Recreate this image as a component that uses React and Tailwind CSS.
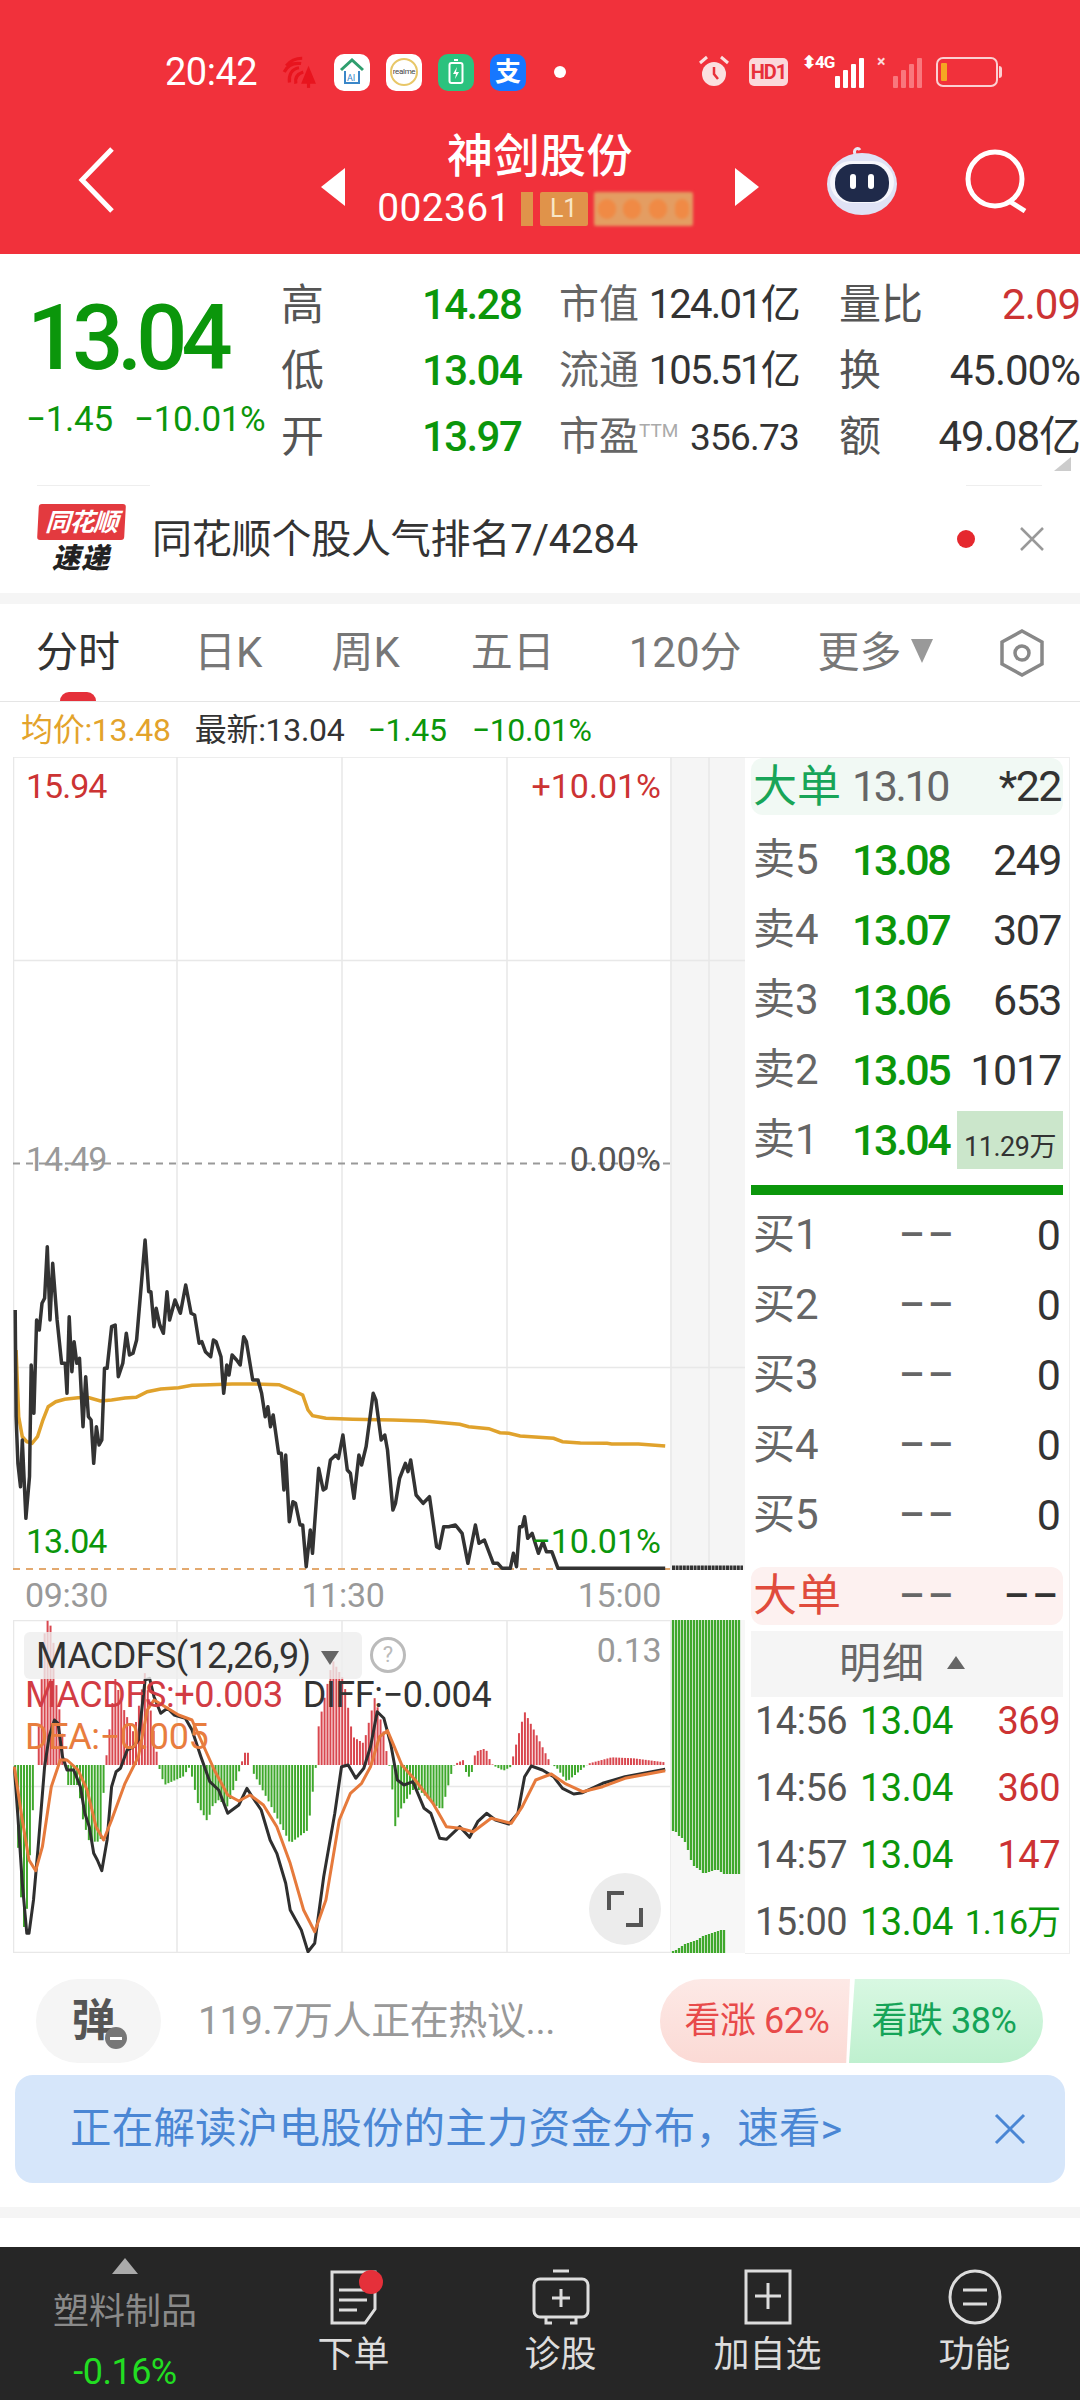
const GREEN = "text-[#0b960b]";

// traces are read off the zoomed chart, so they stay in those coordinates
const toPriceX = (x) => x / 2.24 - 13;
const toPriceY = (y) => y / 3 + 393;
const toMacdY = (y) => y / 3 - 20;

const linePts = (pts, toY) => pts.map(([x, y]) => `${toPriceX(x).toFixed(1)},${toY(y).toFixed(1)}`).join(" ");

const PRICE = [[34,480],[36,800],[40,940],[46,1010],[50,870],[58,1105],[66,980],[70,645],[76,790],[82,510],[88,540],[94,460],[100,445],[106,290],[112,510],[118,340],[128,510],[138,640],[146,640],[150,730],[155,500],[161,665],[166,575],[172,640],[178,625],[186,830],[192,680],[198,800],[204,810],[210,940],[216,830],[222,885],[228,870],[234,655],[240,655],[250,530],[258,525],[265,680],[275,640],[283,550],[290,615],[298,610],[306,570],[325,270],[333,425],[338,425],[345,530],[350,475],[358,525],[366,550],[374,425],[380,510],[392,450],[404,490],[416,405],[428,490],[436,495],[446,580],[452,575],[460,605],[472,620],[478,570],[484,575],[495,620],[501,730],[508,645],[513,675],[520,615],[530,630],[538,645],[546,560],[552,575],[566,690],[578,690],[586,730],[594,800],[600,770],[606,830],[612,795],[624,910],[630,910],[636,1020],[640,915],[648,1115],[656,1055],[662,1060],[672,1125],[678,1125],[686,1250],[695,1140],[700,1210],[714,955],[724,1020],[730,1015],[740,930],[752,915],[758,925],[768,855],[778,960],[785,970],[793,1045],[804,915],[810,945],[820,890],[836,730],[842,750],[854,870],[862,855],[868,900],[880,1080],[886,1060],[895,985],[908,940],[914,965],[920,930],[932,1035],[948,1060],[962,1040],[978,1190],[984,1195],[994,1130],[1005,1130],[1020,1125],[1035,1150],[1048,1240],[1065,1125],[1073,1180],[1085,1170],[1105,1240],[1115,1240],[1125,1255],[1143,1255],[1150,1210],[1157,1250],[1164,1130],[1170,1130],[1175,1100],[1182,1165],[1192,1150],[1206,1210],[1216,1175],[1224,1205],[1236,1205],[1250,1255],[1490,1255]];
const AVG = [[36,600],[42,800],[50,860],[60,875],[72,880],[84,860],[96,810],[108,770],[125,755],[145,748],[175,743],[200,743],[225,753],[250,750],[280,744],[305,742],[330,725],[360,717],[400,713],[430,706],[470,704],[520,702],[570,702],[625,704],[650,718],[678,735],[690,780],[700,797],[730,805],[790,808],[880,810],[950,813],[1030,823],[1050,830],[1095,836],[1120,848],[1140,850],[1165,858],[1240,865],[1260,875],[1300,879],[1360,880],[1370,882],[1430,882],[1490,888]];
const DIFF = [[32,500],[40,650],[50,850],[60,1000],[65,1000],[75,900],[85,750],[100,500],[110,410],[122,360],[130,370],[140,470],[150,510],[165,510],[180,560],[190,640],[200,680],[210,760],[218,780],[228,812],[240,720],[250,560],[260,515],[270,505],[285,450],[300,440],[310,420],[325,240],[335,235],[345,290],[360,340],[375,325],[390,345],[415,355],[430,390],[450,470],[470,545],[490,570],[510,640],[535,615],[553,565],[565,590],[585,630],[605,720],[620,760],[640,850],[650,930],[675,990],[690,1055],[705,1030],[725,830],[750,640],[765,500],[780,495],[797,535],[815,505],[830,440],[845,335],[860,355],[875,430],[890,540],[905,555],[925,545],[950,625],[965,640],[985,715],[1000,718],[1030,680],[1052,712],[1070,665],[1090,640],[1110,660],[1140,672],[1160,640],[1175,530],[1190,498],[1215,510],[1240,530],[1260,565],[1285,582],[1305,578],[1350,550],[1400,530],[1490,508]];
const DEA = [[32,500],[50,660],[65,780],[80,812],[95,740],[115,560],[135,480],[150,480],[175,510],[195,570],[215,680],[232,720],[250,660],[280,550],[310,470],[330,330],[345,300],[370,320],[400,345],[430,360],[450,420],[480,510],[510,585],[535,603],[560,585],[590,615],[620,680],[650,790],[680,930],[705,995],[730,900],[760,660],[785,580],[810,550],[830,500],[850,410],[868,392],[880,430],[900,495],[930,540],[970,610],[1000,680],[1030,685],[1060,695],[1100,655],[1145,670],[1170,620],[1200,540],[1235,522],[1265,550],[1305,575],[1350,560],[1400,535],[1490,512]];
const HIST = [[32,495],[40,730],[48,910],[57,1020],[65,800],[72,680],[78,495],[82,495],[88,350],[100,100],[107,60],[118,90],[125,240],[135,350],[148,495],[150,555],[175,555],[186,660],[200,725],[225,725],[236,495],[240,450],[258,235],[275,320],[300,400],[325,215],[345,400],[355,495],[360,520],[368,555],[410,530],[425,500],[445,620],[465,665],[475,620],[490,600],[510,620],[525,560],[540,495],[545,470],[553,445],[562,495],[568,520],[600,600],[650,730],[690,690],[708,495],[714,375],[745,180],[770,240],[790,410],[815,430],[840,290],[860,400],[870,495],[875,500],[885,680],[900,620],[930,560],[970,610],[990,630],[1015,500],[1022,490],[1038,480],[1042,495],[1045,530],[1055,530],[1060,495],[1065,455],[1088,445],[1100,490],[1110,500],[1128,512],[1145,500],[1150,465],[1175,335],[1200,400],[1235,495],[1245,500],[1270,545],[1310,500],[1320,490],[1370,472],[1420,475],[1490,487]];

function histAt(x) {
  for (let i = 1; i < HIST.length; i++) {
    if (x <= HIST[i][0]) {
      const [x0, y0] = HIST[i - 1];
      const [x1, y1] = HIST[i];
      return y0 + ((y1 - y0) * (x - x0)) / (x1 - x0);
    }
  }
  return 495;
}

const histBars = [];
for (let x = 34; x < 1492; x += 6.6) histBars.push([x, histAt(x)]);

const auctionTop = [211,212,216,218,222,230,240,246,248,250,253,253,252,251,250,250,252,254,254,254,254,254,254];
const auctionBottom = [331,330,328,326,324,323,322,321,320,318,316,315,314,313,312,311,310,310];

function PriceChart() {
  const grid = "#e8e8e8";
  return (
    <div className="relative h-[813px]">
      <svg width="732" height="813" className="block">
        <rect x="657" y="0" width="75" height="813" fill="#f5f5f5" />
        <path d="M0.5 0H732M0 203.5H732M0 610.5H732M0.5 0V813M164 0V813M329 0V813M494 0V813M658 0V813M696 0V813" stroke={grid} strokeWidth="1.5" fill="none" />
        <path d="M0 406.5H657" stroke="#999" strokeWidth="2" strokeDasharray="7 6" />
        <path d="M0 812H657" stroke="#e3a96f" strokeWidth="2" strokeDasharray="7 6" />
        <polyline points={linePts(AVG, toPriceY)} fill="none" stroke="#e0a22c" strokeWidth="3.5" />
        <polyline points={linePts(PRICE, toPriceY)} fill="none" stroke="#333" strokeWidth="3.5" strokeLinejoin="round" />
        <path d="M659 811H730" stroke="#333" strokeWidth="5" strokeDasharray="3 0.6" />
      </svg>
      <span className="absolute left-[13px] top-[11px] text-[34px] leading-[36px] tracking-[-1px] text-[#cc3333]">15.94</span>
      <span className="absolute right-[84px] top-[11px] text-[34px] leading-[36px] tracking-[0px] text-[#cc3333]">+10.01%</span>
      <span className="absolute left-[13px] top-[384px] text-[34px] leading-[36px] tracking-[-1px] text-[#999]">14.49</span>
      <span className="absolute right-[84px] top-[384px] text-[34px] leading-[36px] tracking-[0px] text-[#555]">0.00%</span>
      <span className={`absolute left-[13px] top-[766px] text-[34px] leading-[36px] tracking-[-1px] ${GREEN}`}>13.04</span>
      <span className={`absolute right-[84px] top-[766px] text-[34px] leading-[36px] tracking-[0px] ${GREEN}`}>−10.01%</span>
    </div>
  );
}

function MacdChart() {
  const grid = "#e8e8e8";
  return (
    <div className="relative h-[333px]">
      <svg width="732" height="333" className="block">
        <path d="M0 0.5H657M0 166.5H657M0 332.5H657M0.5 0V333M164 0V333M329 0V333M494 0V333M658 0V333" stroke={grid} strokeWidth="1.5" fill="none" />
        <rect x="658" y="0" width="74" height="333" fill="#f7f7f7" />
        {histBars.map(([x, y]) => (
          <line
            key={x}
            x1={toPriceX(x)}
            x2={toPriceX(x)}
            y1={toMacdY(495)}
            y2={toMacdY(y)}
            stroke={y < 495 ? "#d9474f" : "#3fa82c"}
            strokeWidth="2"
          />
        ))}
        {auctionTop.map((h, i) => (
          <line key={i} x1={660 + i * 3} x2={660 + i * 3} y1="0" y2={h} stroke="#3fa82c" strokeWidth="2.3" />
        ))}
        {auctionBottom.map((h, i) => (
          <line key={i} x1={660 + i * 3} x2={660 + i * 3} y1="333" y2={h} stroke="#3fa82c" strokeWidth="2.3" />
        ))}
        <polyline points={linePts(DIFF, toMacdY)} fill="none" stroke="#2f2f2f" strokeWidth="3" strokeLinejoin="round" />
        <polyline points={linePts(DEA, toMacdY)} fill="none" stroke="#e67a3c" strokeWidth="3" strokeLinejoin="round" />
      </svg>

      <div className="absolute left-[11px] top-[12px] flex h-[47px] w-[338px] items-center rounded-md bg-[#eeeeee]/80 pl-[12px]">
        <span className="text-[36px] tracking-[-0.6px] text-[#333]">MACDFS(12,26,9)</span>
        <svg width="18" height="14" viewBox="0 0 18 14" className="ml-[10px] mt-[4px]">
          <path d="M0 0H18L9 14Z" fill="#666" />
        </svg>
      </div>
      <div className="absolute left-[357px] top-[17px] flex h-[36px] w-[36px] items-center justify-center rounded-full border-[3px] border-[#bbb] text-[22px] leading-none text-[#bbb]">?</div>
      <span className="absolute right-[84px] top-[12px] text-[34px] leading-[36px] tracking-[-0.5px] text-[#999]">0.13</span>
      <div className="absolute left-[12px] top-[57px] flex text-[36px] leading-[36px] tracking-[-0.4px]">
        <span className="text-[#d23c44]">MACDFS:+0.003</span>
        <span className="ml-[20px] text-[#333]">DIFF:−0.004</span>
      </div>
      <span className="absolute left-[12px] top-[99px] text-[36px] leading-[36px] tracking-[-0.4px] text-[#e87d3e]">DEA:−0.005</span>
      <div className="absolute left-[576px] top-[253px] flex h-[72px] w-[72px] items-center justify-center rounded-full bg-[#ececec]">
        <svg width="38" height="38" viewBox="0 0 38 38" fill="none" stroke="#555" strokeWidth="4">
          <path d="M18 3H3V20M20 35H35V18" />
        </svg>
      </div>
    </div>
  );
}

const sells = [
  ["卖5", "13.08", "249"],
  ["卖4", "13.07", "307"],
  ["卖3", "13.06", "653"],
  ["卖2", "13.05", "1017"],
];
const details = [
  ["14:56", "369"],
  ["14:56", "360"],
  ["14:57", "147"],
];

function OrderPanel() {
  return (
    <div className="h-[1197px] w-[325px] border-y border-r border-[#eeeeee]">
      <div className="mx-[6px] flex h-[57px] items-center rounded-xl bg-[#f1f9f4] pl-[2px] pr-[2px]">
        <span className="w-[99px] text-[44px] leading-none text-[#18a558]">大单</span>
        <span className="text-[43px] leading-none tracking-[-2.4px] text-[#666]">13.10</span>
        <span className="ml-auto text-[43px] leading-none tracking-[-1.5px] text-[#333]">*22</span>
      </div>

      <div className="mt-[10px]">
        {sells.map(([label, price, qty]) => (
          <div key={label} className="flex h-[70px] items-center pl-[8px] pr-[8px]">
            <span className="w-[99px] text-[42px] leading-none text-[#666]">{label}</span>
            <span className={`text-[43px] font-medium leading-none tracking-[-2.5px] ${GREEN}`}>{price}</span>
            <span className="ml-auto text-[43px] leading-none tracking-[-1.5px] text-[#333]">{qty}</span>
          </div>
        ))}
        <div className="flex h-[70px] items-center pl-[8px] pr-[6px]">
          <span className="w-[99px] text-[42px] leading-none text-[#666]">卖1</span>
          <span className={`text-[43px] font-medium leading-none tracking-[-2.5px] ${GREEN}`}>13.04</span>
          <span className="ml-auto flex h-[58px] w-[106px] items-end justify-center bg-[#cbe6cb] pb-[5px] text-[27px] leading-[34px] tracking-[-0.5px] text-[#333]">11.29万</span>
        </div>
      </div>

      <div className="mx-[6px] mt-[10px] h-[10px] bg-[#0b960b]" />

      <div className="mt-[5px]">
        {["买1", "买2", "买3", "买4", "买5"].map((label) => (
          <div key={label} className="flex h-[70px] items-center pl-[8px] pr-[8px]">
            <span className="w-[146px] text-[42px] leading-none text-[#666]">{label}</span>
            <span className="text-[40px] font-medium leading-none tracking-[3px] text-[#666]">––</span>
            <span className="ml-auto text-[43px] leading-none text-[#333]">0</span>
          </div>
        ))}
      </div>

      <div className="mx-[6px] mt-[17px] flex h-[58px] items-center rounded-xl bg-[#fdf1f0] pl-[2px] pr-[2px]">
        <span className="w-[146px] text-[44px] leading-none text-[#e04b3c]">大单</span>
        <span className="text-[40px] font-medium leading-none tracking-[3px] text-[#666]">––</span>
        <span className="ml-auto text-[40px] font-medium leading-none tracking-[3px] text-[#333]">––</span>
      </div>

      <div className="mx-[6px] mt-[6px] flex h-[66px] items-center bg-[#f5f5f5] pl-[88px]">
        <span className="text-[42px] leading-none tracking-[1px] text-[#666]">明细</span>
        <svg width="18" height="13" viewBox="0 0 18 13" className="ml-[22px] mb-[4px]">
          <path d="M0 13H18L9 0Z" fill="#666" />
        </svg>
      </div>

      <div className="flex flex-col gap-[20px]">
        {details.map(([time, qty], i) => (
          <div key={i} className="flex h-[47px] items-center pl-[10px] pr-[9px]">
            <span className="w-[105px] text-[38px] leading-none tracking-[-0.5px] text-[#555]">{time}</span>
            <span className={`text-[38px] leading-none tracking-[-0.5px] ${GREEN}`}>13.04</span>
            <span className="ml-auto text-[38px] leading-none tracking-[-0.5px] text-[#cc3333]">{qty}</span>
          </div>
        ))}
        <div className="flex h-[47px] items-center pl-[10px] pr-[9px]">
          <span className="w-[105px] text-[38px] leading-none tracking-[-0.5px] text-[#555]">15:00</span>
          <span className={`text-[38px] leading-none tracking-[-0.5px] ${GREEN}`}>13.04</span>
          <span className={`ml-auto text-[34px] leading-none tracking-[-1px] ${GREEN}`}>1.16万</span>
        </div>
      </div>
    </div>
  );
}

function Signal({ color = "#fff", bars = [10, 16, 22, 30] }) {
  return (
    <div className="flex items-end gap-[3px]">
      {bars.map((h, i) => (
        <div key={i} className="w-[5px] rounded-[1px]" style={{ height: h, backgroundColor: color }} />
      ))}
    </div>
  );
}

function StatusBar() {
  return (
    <div className="flex h-[38px] items-center pl-[165px] pr-[78px] text-white">
      <span className="w-[93px] text-[38px] leading-none tracking-[-0.5px]">20:42</span>

      <svg width="36" height="36" viewBox="0 0 34 32" className="ml-[23px]" fill="none" stroke="#e8141e" strokeWidth="3">
        <path d="M5 10C9 5 14 3 20 3M3 16C6 10 12 7 19 8M8 26C7 19 10 13 17 12M14 27C13 22 15 18 21 16" />
        <path d="M26 10L33 27H19Z" fill="#e8141e" stroke="none" />
        <path d="M26 24V31" />
      </svg>

      <div className="ml-[17px] flex h-[37px] w-[36px] items-center justify-center rounded-[10px] bg-white">
        <svg width="26" height="28" viewBox="0 0 26 28" fill="none">
          <path d="M2 12L13 2L24 12" stroke="#2f9e6e" strokeWidth="3" />
          <path d="M6 13V25H20V13" stroke="#3a86c8" strokeWidth="2" />
          <text x="8" y="23" fontSize="9" fill="#3a86c8" fontFamily="Roboto">AI</text>
        </svg>
      </div>
      <div className="ml-[16px] flex h-[37px] w-[36px] items-center justify-center rounded-[10px] bg-white">
        <div className="flex h-[28px] w-[28px] items-center justify-center rounded-full border-2 border-[#e8c768] text-[8px] leading-none tracking-[-0.3px] text-[#444]">realme</div>
      </div>
      <div className="ml-[16px] flex h-[37px] w-[36px] items-center justify-center rounded-[10px] bg-[#2bc27e]">
        <svg width="16" height="26" viewBox="0 0 16 26" fill="none">
          <rect x="1.5" y="4" width="13" height="20" rx="2" stroke="#fff" strokeWidth="2" />
          <path d="M6 1H10" stroke="#fff" strokeWidth="2" />
          <path d="M9 8L5 15H8L7 20L11 13H8Z" fill="#fff" />
        </svg>
      </div>
      <div className="ml-[16px] flex h-[37px] w-[36px] items-center justify-center rounded-[10px] bg-[#1677ff] text-[26px] font-bold leading-none text-white">支</div>
      <div className="ml-[28px] h-[12px] w-[12px] rounded-full bg-white" />

      <div className="ml-auto flex items-center">
        <svg width="32" height="36" viewBox="0 0 32 36" fill="none">
          <circle cx="16" cy="20" r="12" fill="#fbe0e0" />
          <path d="M16 13V20L20 25" stroke="#e8303a" strokeWidth="2.5" />
          <path d="M2 9L9 3M30 9L23 3" stroke="#fbe0e0" strokeWidth="3" />
        </svg>
        <div className="ml-[19px] flex h-[28px] w-[39px] items-center justify-center rounded-[5px] bg-[#fbd9db] text-[20px] font-bold leading-none tracking-[-1px] text-[#e8303a]">HD1</div>
        <div className="relative ml-[14px] flex h-[32px] w-[62px] items-end justify-end">
          <Signal bars={[12, 18, 24, 30]} />
          <span className="absolute left-0 top-[-2px] text-[17px] font-bold leading-none tracking-[-1px] text-white">⬍4G</span>
        </div>
        <div className="relative ml-[13px] flex h-[32px] w-[45px] items-end justify-end">
          <Signal color="#f9777d" bars={[12, 18, 24, 30]} />
          <span className="absolute left-0 top-[-2px] text-[16px] font-bold leading-none text-[#fbd9db]">×</span>
        </div>
        <div className="ml-[14px] flex items-center">
          <div className="flex h-[30px] w-[62px] items-center rounded-[7px] border-2 border-[#fbd0d2] px-[3px]">
            <div className="h-[18px] w-[6px] rounded-[1px] bg-[#f5a623]" />
          </div>
          <div className="ml-[1px] h-[12px] w-[3px] rounded-r bg-[#fbd0d2]" />
        </div>
      </div>
    </div>
  );
}

function NavBar() {
  return (
    <div className="flex h-[163px] items-center pl-[78px] text-white">
      <svg width="36" height="66" viewBox="0 0 36 66" fill="none" stroke="#fff" strokeWidth="5" className="mt-[14px]">
        <path d="M34 2L4 33L34 64" />
      </svg>
      <svg width="24" height="38" viewBox="0 0 24 38" className="ml-[207px] mt-[28px]">
        <path d="M24 0V38L0 19Z" fill="#fff" />
      </svg>
      <div className="flex w-[390px] flex-col items-center pt-[8px]">
        <div className="text-[46px] font-medium leading-[56px] tracking-[0.5px]">神剑股份</div>
        <div className="mt-[8px] mr-[10px] flex h-[34px] items-center">
          <span className="text-[39px] leading-none tracking-[0.3px]">002361</span>
          <div className="ml-[10px] h-[34px] w-[12px] bg-[#e0934a]" />
          <div className="ml-[7px] flex h-[34px] w-[48px] items-center justify-center rounded-[2px] bg-[#e0934a] text-[25px] leading-none text-[#f8e6c8]">L1</div>
          <div className="ml-[6px] flex h-[34px] w-[99px] items-center justify-around overflow-hidden rounded-[2px] bg-[#e49d62] blur-[1.5px]">
            <div className="h-[20px] w-[18px] rounded-full bg-[#f08a45]" />
            <div className="h-[20px] w-[18px] rounded-full bg-[#f08a45]" />
            <div className="h-[20px] w-[18px] rounded-full bg-[#f08a45]" />
            <div className="h-[20px] w-[14px] rounded-full bg-[#f08a45]" />
          </div>
        </div>
      </div>
      <svg width="24" height="38" viewBox="0 0 24 38" className="mt-[28px]">
        <path d="M0 0V38L24 19Z" fill="#fff" />
      </svg>
      <svg width="74" height="70" viewBox="0 0 74 70" className="ml-[66px] mt-[16px]">
        <path d="M30 8C28 3 33 1 35 4" stroke="#e8e8f4" strokeWidth="3" fill="none" />
        <ellipse cx="37" cy="38" rx="35" ry="31" fill="#dfe2f5" />
        <rect x="5" y="15" width="64" height="42" rx="21" fill="#fff" opacity="0.7" />
        <rect x="10" y="18" width="54" height="38" rx="18" fill="#1f2a4a" />
        <rect x="25" y="28" width="6" height="15" rx="3" fill="#fff" />
        <rect x="43" y="28" width="6" height="15" rx="3" fill="#fff" />
      </svg>
      <svg width="64" height="64" viewBox="0 0 64 64" className="ml-[66px] mt-[16px]" fill="none" stroke="#fff" strokeWidth="5">
        <circle cx="30" cy="30" r="27" />
        <path d="M44 52L60 62" />
      </svg>
    </div>
  );
}

function Quote() {
  const rows = [
    ["高", "14.28", "市值", "124.01亿", "量比", "2.09", "text-[#cc3333]"],
    ["低", "13.04", "流通", "105.51亿", "换", "45.00%", "text-[#333]"],
    ["开", "13.97", "市盈", "356.73", "额", "49.08亿", "text-[#333]"],
  ];
  return (
    <div className="relative flex h-[231px] pl-[26px] pt-[18px]">
      <div className="w-[255px]">
        <div className={`mt-[17px] ml-[1px] text-[90px] font-medium leading-[100px] tracking-[-6px] ${GREEN}`}>13.04</div>
        <div className={`mt-[12px] flex text-[35px] leading-[38px] tracking-[-0.3px] ${GREEN}`}>
          <span className="w-[108px]">−1.45</span>
          <span>−10.01%</span>
        </div>
      </div>
      <div className="flex w-[799px] flex-col">
        {rows.map(([label, price, name, amount, name2, value, color]) => (
          <div key={label} className="flex h-[66px] items-center">
            <span className="w-[141px] text-[43px] leading-none text-[#555]">{label}</span>
            <span className={`w-[137px] text-[42px] font-medium leading-none tracking-[-1.6px] ${GREEN}`}>{price}</span>
            <div className="flex w-[240px] items-center">
              <span className="text-[40px] leading-none text-[#666]">{name}</span>
              {name === "市盈" && <span className="mb-[14px] text-[19px] leading-none text-[#aaa]">TTM</span>}
              <span className={`ml-auto text-[#333] ${name === "市盈" ? "text-[37px] tracking-[-0.8px]" : "text-[40px] tracking-[-1.8px]"} leading-none`}>{amount}</span>
            </div>
            <span className="ml-[40px] text-[42px] leading-none text-[#555]">{name2}</span>
            <span className={`ml-auto text-[42px] leading-none tracking-[-1px] ${color}`}>{value}</span>
          </div>
        ))}
      </div>
      <svg width="17" height="14" viewBox="0 0 17 14" className="absolute right-[9px] top-[203px]">
        <path d="M17 0V14H0Z" fill="#ccc" />
      </svg>
    </div>
  );
}

function NewsRow() {
  return (
    <div className="relative flex h-[108px] items-center pl-[37px] pr-[36px]">
      <div className="absolute left-[37px] top-0 h-[1px] w-[113px] bg-[#eeeeee]" />
      <div className="absolute left-[966px] top-0 h-[1px] w-[76px] bg-[#eeeeee]" />
      <div className="flex w-[88px] flex-col items-center">
        <div className="flex h-[36px] w-[87px] -skew-x-3 items-center justify-center rounded-[3px] bg-[#e33a3f] text-[25px] font-bold italic leading-none tracking-[-1px] text-white">同花顺</div>
        <div className="mt-[3px] text-[28px] font-black italic leading-[32px] tracking-[1px] text-[#222]">速递</div>
      </div>
      <span className="ml-[27px] mt-[2px] text-[40px] leading-none tracking-[-0.2px] text-[#333]">同花顺个股人气排名7/4284</span>
      <div className="ml-auto h-[18px] w-[18px] rounded-full bg-[#e5282e]" />
      <svg width="24" height="24" viewBox="0 0 24 24" className="ml-[45px]" stroke="#999" strokeWidth="2.5">
        <path d="M1 1L23 23M23 1L1 23" />
      </svg>
    </div>
  );
}

function Tabs() {
  return (
    <div className="relative flex h-[98px] items-center border-b border-[#e5e5e5] text-[42px] leading-none text-[#777]">
      <span className="ml-[36px] text-[#333]">分时</span>
      <span className="ml-[74px]">日K</span>
      <span className="ml-[69px]">周K</span>
      <span className="ml-[71px]">五日</span>
      <span className="ml-[74px]">120分</span>
      <span className="ml-[76px]">更多</span>
      <svg width="22" height="24" viewBox="0 0 22 24" className="ml-[9px] mb-[4px]">
        <path d="M0 0H22L11 24Z" fill="#999" />
      </svg>
      <svg width="48" height="48" viewBox="0 0 48 48" className="ml-[65px]" fill="none" stroke="#888" strokeWidth="3.5">
        <path d="M24 2L44 13V35L24 46L4 35V13Z" />
        <circle cx="24" cy="24" r="7" />
      </svg>
      <div className="absolute bottom-0 left-[60px] h-[9px] w-[36px] rounded-t-full bg-[#e5303a]" />
    </div>
  );
}

function Footer() {
  return (
    <div className="flex h-[153px] bg-[#262626]">
      <div className="flex w-[250px] flex-col items-center pt-[11px]">
        <svg width="26" height="16" viewBox="0 0 26 16">
          <path d="M0 16H26L13 0Z" fill="#aaa" />
        </svg>
        <span className="mt-[16px] text-[36px] leading-[44px] text-[#8a8a8a]">塑料制品</span>
        <span className="mt-[18px] text-[36px] leading-[40px] tracking-[-0.5px] text-[#22dd22]">-0.16%</span>
      </div>

      <div className="flex w-[207px] flex-col items-center pt-[22px]">
        <div className="relative h-[56px] w-[50px]">
          <svg width="50" height="56" viewBox="0 0 50 56" fill="none" stroke="#ddd" strokeWidth="3">
            <path d="M3 3H46V40L36 54H3Z" />
            <path d="M10 21H38M10 31H38M10 41H28" />
          </svg>
          <div className="absolute right-[-4px] top-[1px] h-[24px] w-[24px] rounded-full bg-[#e5303a]" />
        </div>
        <span className="mt-[8px] text-[36px] leading-[44px] text-[#ddd]">下单</span>
      </div>

      <div className="flex w-[207px] flex-col items-center pt-[22px]">
        <svg width="58" height="56" viewBox="0 0 58 56" fill="none" stroke="#ddd" strokeWidth="3">
          <path d="M21 2H37" />
          <rect x="2" y="10" width="54" height="38" rx="6" />
          <path d="M29 20V38M20 29H38M14 48V54H20M38 54H44V48" />
        </svg>
        <span className="mt-[8px] text-[36px] leading-[44px] text-[#ddd]">诊股</span>
      </div>

      <div className="flex w-[207px] flex-col items-center pt-[22px]">
        <svg width="48" height="56" viewBox="0 0 48 56" fill="none" stroke="#ddd" strokeWidth="3">
          <rect x="2" y="2" width="44" height="52" />
          <path d="M24 14V40M11 27H37" />
        </svg>
        <span className="mt-[8px] text-[36px] leading-[44px] text-[#ddd]">加自选</span>
      </div>

      <div className="flex w-[207px] flex-col items-center pt-[22px]">
        <svg width="54" height="56" viewBox="0 0 54 56" fill="none" stroke="#ddd" strokeWidth="3">
          <ellipse cx="27" cy="28" rx="25" ry="26" />
          <path d="M15 21H39M15 35H39" />
        </svg>
        <span className="mt-[8px] text-[36px] leading-[44px] text-[#ddd]">功能</span>
      </div>
    </div>
  );
}

export default function App() {
  return (
    <div className="h-[2400px] w-[1080px] overflow-hidden bg-white font-[Roboto,'Noto_Sans_CJK_SC',sans-serif]">
      <div className="h-[254px] bg-[#f1313b] pt-[53px]">
        <StatusBar />
        <NavBar />
      </div>

      <Quote />
      <NewsRow />
      <div className="h-[11px] bg-[#f5f5f5]" />
      <Tabs />

      <div className="flex h-[55px] items-center text-[32px] leading-none tracking-[-0.3px]">
        <span className="ml-[21px] text-[#e3a32b]">均价:13.48</span>
        <span className="ml-[24px] text-[#333]">最新:13.04</span>
        <span className={`ml-[23px] ${GREEN}`}>−1.45</span>
        <span className={`ml-[25px] ${GREEN}`}>−10.01%</span>
      </div>

      <div className="flex pl-[13px]">
        <div className="w-[732px]">
          <PriceChart />
          <div className="flex h-[50px] items-center justify-between pl-[12px] pr-[84px] text-[34px] leading-none tracking-[-0.3px] text-[#999]">
            <span>09:30</span>
            <span>11:30</span>
            <span>15:00</span>
          </div>
          <MacdChart />
        </div>
        <OrderPanel />
      </div>

      <div className="mt-[25px] flex h-[84px] items-center pl-[36px]">
        <div className="relative flex h-[84px] w-[125px] items-center justify-center rounded-full bg-[#f5f5f5] pr-[10px]">
          <span className="text-[44px] font-bold leading-none text-[#555]">弹</span>
          <div className="absolute bottom-[14px] right-[34px] flex h-[22px] w-[22px] items-center justify-center rounded-full bg-[#777]">
            <div className="h-[3px] w-[12px] bg-white" />
          </div>
        </div>
        <span className="ml-[37px] w-[462px] text-[39px] leading-none tracking-[-0.4px] text-[#999]">119.7万人正在热议...</span>
        <div className="flex h-[84px] w-[190px] items-center justify-center rounded-l-full bg-gradient-to-b from-[#fde9e6] to-[#fbdad5] pl-[4px] text-[36px] leading-none tracking-[-0.5px] text-[#e84a4a] [clip-path:polygon(0_0,100%_0,98%_100%,0_100%)]">看涨 62%</div>
        <div className="-ml-[1px] flex h-[84px] w-[194px] items-center justify-center rounded-r-full bg-gradient-to-b from-[#d8f8e2] to-[#bff0cf] pr-[4px] text-[36px] leading-none tracking-[-0.5px] text-[#15a458] [clip-path:polygon(3%_0,100%_0,100%_100%,0_100%)]">看跌 38%</div>
      </div>

      <div className="mx-[15px] mt-[12px] flex h-[108px] items-center rounded-[18px] bg-[#d6e6fa] pl-[55px] pr-[39px]">
        <span className="text-[41.5px] leading-none tracking-[0.2px] text-[#4a86d4]">正在解读沪电股份的主力资金分布，速看&gt;</span>
        <svg width="32" height="32" viewBox="0 0 32 32" className="ml-auto" stroke="#4a86d4" strokeWidth="3">
          <path d="M2 2L30 30M30 2L2 30" />
        </svg>
      </div>

      <div className="mt-[24px] h-[11px] bg-[#f5f5f5]" />
      <div className="h-[29px]" />
      <Footer />
    </div>
  );
}
